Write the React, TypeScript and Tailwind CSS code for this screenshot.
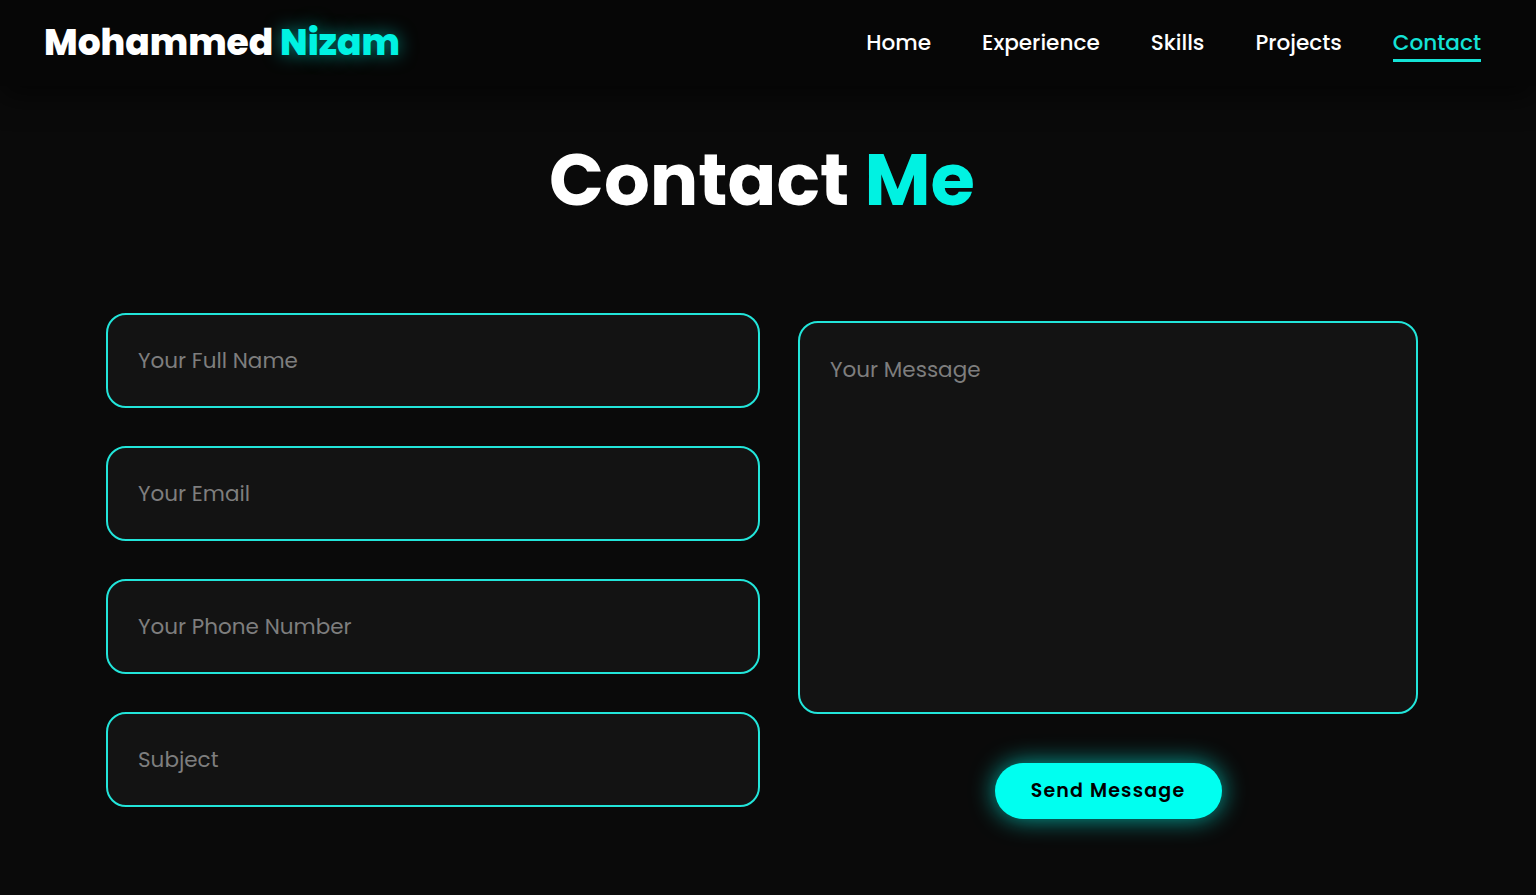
import React from 'react';

const navLinks = ['Home', 'Experience', 'Skills', 'Projects', 'Contact'];

const fields = ['Your Full Name', 'Your Email', 'Your Phone Number', 'Subject'];

const App: React.FC = () => {
  return (
    <div className="min-h-screen bg-[#0a0a0a] text-white font-['Poppins','Inter',sans-serif]">
      <header className="h-[86px] bg-[#060606] flex items-center justify-between pl-[44px] pr-[55px] shadow-[0_10px_30px_rgba(0,0,0,0.6)]">
        <h1 className="text-[36px] font-extrabold">
          Mohammed{' '}
          <span className="text-[#00f2e2] [text-shadow:0_0_18px_rgba(0,242,226,0.55)]">Nizam</span>
        </h1>
        <nav className="flex items-center gap-[51px]">
          {navLinks.map((link) => (
            <a
              key={link}
              href="#"
              className={
                link === 'Contact'
                  ? 'text-[21.6px] font-medium text-[#14e3d6] border-b-[3px] border-[#14e3d6] pb-[0px] mt-[3px]'
                  : 'text-[21.6px] font-medium text-white'
              }
            >
              {link}
            </a>
          ))}
        </nav>
      </header>

      <main className="pt-[58px] pb-[60px]">
        <h2 className="text-center text-[72px] font-bold leading-none pr-[12px]">
          Contact <span className="text-[#00f2e2]">Me</span>
        </h2>

        <div className="mt-[97px] pl-[106px] flex gap-[38px]">
          <div className="w-[654px] flex flex-col gap-[38px]">
            {fields.map((f) => (
              <input
                key={f}
                type="text"
                placeholder={f}
                className="h-[95px] rounded-[20px] border-2 border-[#22e5da] bg-[#131313] px-[30px] text-[21.5px] text-white placeholder-[#7e7e7e] outline-none"
              />
            ))}
          </div>
          <div className="w-[620px] pt-[8px] flex flex-col items-center">
            <textarea
              placeholder="Your Message"
              className="w-full h-[393px] resize-none rounded-[20px] border-2 border-[#22e5da] bg-[#131313] px-[30px] py-[31px] text-[21.5px] text-white placeholder-[#7e7e7e] outline-none"
            />
            <button className="mt-[49px] w-[227px] h-[56px] rounded-full bg-[#00fff0] text-black text-[19px] font-semibold tracking-[1.2px] shadow-[0_0_24px_rgba(0,255,240,0.65)]">
              Send Message
            </button>
          </div>
        </div>
      </main>
    </div>
  );
};

export default App;
